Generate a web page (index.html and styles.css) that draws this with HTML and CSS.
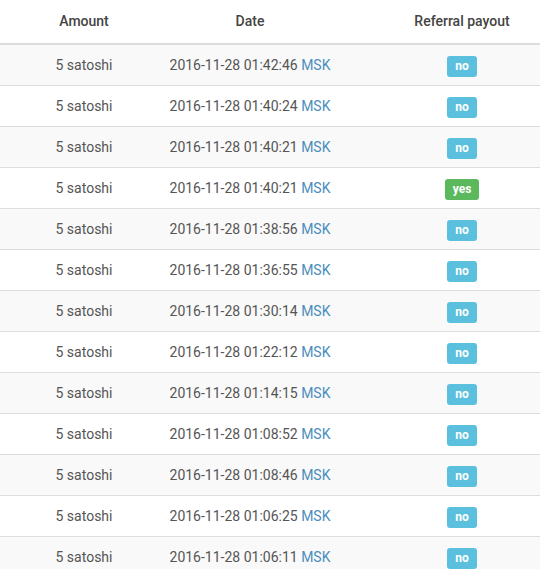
FILE: index.html
```html
<!DOCTYPE html>
<html lang="en">
<head>
  <meta charset="UTF-8" />
  <title>Payouts</title>
  <link rel="stylesheet" href="styles.css">
</head>
<body>
  <table class="payouts">
    <thead>
      <tr>
        <th class="col-amount">Amount</th>
        <th class="col-date">Date</th>
        <th class="col-ref">Referral payout</th>
      </tr>
    </thead>
    <tbody>
      <tr><td>5 satoshi</td><td class="date">2016-11-28 01:42:46 <a href="#">MSK</a></td><td class="ref"><span class="label info">no</span></td></tr>
      <tr><td>5 satoshi</td><td class="date">2016-11-28 01:40:24 <a href="#">MSK</a></td><td class="ref"><span class="label info">no</span></td></tr>
      <tr><td>5 satoshi</td><td class="date">2016-11-28 01:40:21 <a href="#">MSK</a></td><td class="ref"><span class="label info">no</span></td></tr>
      <tr><td>5 satoshi</td><td class="date">2016-11-28 01:40:21 <a href="#">MSK</a></td><td class="ref"><span class="label success">yes</span></td></tr>
      <tr><td>5 satoshi</td><td class="date">2016-11-28 01:38:56 <a href="#">MSK</a></td><td class="ref"><span class="label info">no</span></td></tr>
      <tr><td>5 satoshi</td><td class="date">2016-11-28 01:36:55 <a href="#">MSK</a></td><td class="ref"><span class="label info">no</span></td></tr>
      <tr><td>5 satoshi</td><td class="date">2016-11-28 01:30:14 <a href="#">MSK</a></td><td class="ref"><span class="label info">no</span></td></tr>
      <tr><td>5 satoshi</td><td class="date">2016-11-28 01:22:12 <a href="#">MSK</a></td><td class="ref"><span class="label info">no</span></td></tr>
      <tr><td>5 satoshi</td><td class="date">2016-11-28 01:14:15 <a href="#">MSK</a></td><td class="ref"><span class="label info">no</span></td></tr>
      <tr><td>5 satoshi</td><td class="date">2016-11-28 01:08:52 <a href="#">MSK</a></td><td class="ref"><span class="label info">no</span></td></tr>
      <tr><td>5 satoshi</td><td class="date">2016-11-28 01:08:46 <a href="#">MSK</a></td><td class="ref"><span class="label info">no</span></td></tr>
      <tr><td>5 satoshi</td><td class="date">2016-11-28 01:06:25 <a href="#">MSK</a></td><td class="ref"><span class="label info">no</span></td></tr>
      <tr><td>5 satoshi</td><td class="date">2016-11-28 01:06:11 <a href="#">MSK</a></td><td class="ref"><span class="label info">no</span></td></tr>
    </tbody>
  </table>
</body>
</html>
```

FILE: styles.css
```css
* { box-sizing: border-box; margin: 0; padding: 0; }

body {
  font-family: Roboto, "Liberation Sans", sans-serif;
  font-size: 14px;
  color: #555;
  background: #fff;
  overflow: hidden;
}

.payouts {
  width: 540px;
  border-collapse: collapse;
  table-layout: fixed;
}

.payouts th,
.payouts td {
  text-align: center;
  line-height: 20px;
  padding: 10px 8px;
  white-space: nowrap;
}

.payouts th {
  font-weight: 500;
  color: #444;
  padding: 11px 8px 12px;
  border-bottom: 2px solid #ddd;
}

.payouts td {
  border-top: 1px solid #ddd;
}

.payouts tbody tr:first-child td {
  border-top: none;
}

.payouts tbody tr:nth-child(odd) {
  background: #f9f9f9;
}

.col-amount { width: 168px; }
.col-date { width: 170px; }
.col-ref { width: 202px; }

.payouts th.col-date,
.payouts td.date {
  padding-left: 0;
  padding-right: 6px;
}

.payouts th.col-ref,
.payouts td.ref {
  padding-left: 50px;
  padding-right: 4px;
}

.payouts a {
  color: #4a8dbd;
  text-decoration: none;
}

.label {
  display: inline-block;
  font-size: 12px;
  font-weight: bold;
  line-height: 12px;
  padding: 4px 8px 5px;
  margin: 1px 0 -2px;
  color: #fff;
  border-radius: 3px;
  vertical-align: top;
}

.label.info { background: #5bc0de; }
.label.success { background: #5cb85c; }
```
